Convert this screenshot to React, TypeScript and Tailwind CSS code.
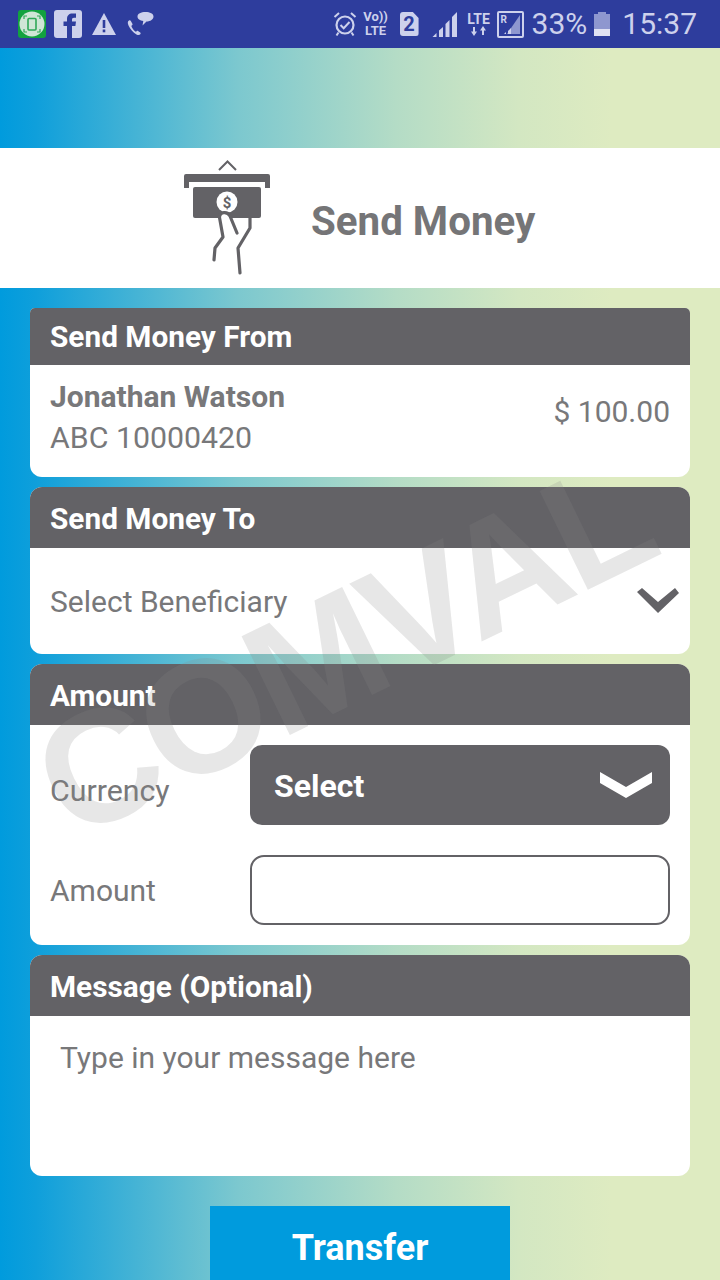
const gradient = "bg-[linear-gradient(90deg,#009bdd_0%,#0f9fdb_5%,#7cc8cf_33%,#b4dcc6_55%,#d3e7c2_72%,#deebc1_85%,#deebc1_100%)]"

const StatusBar = () => (
  <div className="h-12 bg-[#2e3d9d] flex items-center justify-between shrink-0 text-[#cdd1ec]">
    <div className="flex items-center pl-[18px] gap-[8px]">
      {/* screenshot app */}
      <svg width="28" height="28" viewBox="0 0 28 28">
        <rect width="28" height="28" rx="3" fill="#12a23f" />
        <circle cx="14" cy="14" r="12.500" fill="#cfe6d6" />
        <rect x="10" y="8.500" width="8" height="11.500" rx="1" fill="none" stroke="#2fa857" strokeWidth="1.600" />
        <path d="M6 9V6h3M19 6h3v3M22 19v3h-3M9 22H6v-3" fill="none" stroke="#2fa857" strokeWidth="1.200" />
      </svg>
      {/* facebook */}
      <svg width="28" height="28" viewBox="0 0 28 28">
        <rect width="28" height="28" rx="3" fill="#cdd1ec" />
        <path d="M13 28V16H9.500v-4.500H13V9c0-3.600 2.200-5.500 5.300-5.500H22v4.200h-2c-1.500 0-2 .8-2 2v1.800h4l-.6 4.500H18v12z" fill="#2e3d9d" />
      </svg>
      <svg width="24" height="24" viewBox="0 0 24 24" className="ml-[2px]">
        <path d="M12 1 24 23H0z" fill="#cdd1ec" />
        <rect x="10.700" y="8" width="2.600" height="8" fill="#2e3d9d" />
        <rect x="10.700" y="17.500" width="2.600" height="2.800" fill="#2e3d9d" />
      </svg>
      <svg width="27" height="25" viewBox="0 0 27 25" className="ml-[3px]">
        <path d="M2 8.500C.5 9.500.5 11 1.500 13.500c1.500 3.500 4.500 7 8 9 1.700.9 3.200.7 4-.6.3-.5.200-1-.3-1.300L11 19c-.5-.3-1-.2-1.400.3-.4.500-1 .5-1.600 0-1.500-1.300-2.800-3-3.500-4.800-.2-.6 0-1.100.5-1.300.5-.3.700-.7.500-1.300L3.700 8.800C3.500 8.300 2.600 8.100 2 8.500z" fill="#cdd1ec" />
        <path d="M18.500 0C23 0 26.500 1.700 26.500 4.500S23.500 9.500 19.500 9.500l-4 4 .8-4.500C13 8.500 10.500 7 10.500 4.500 10.500 1.700 14 0 18.500 0z" fill="#cdd1ec" />
      </svg>
    </div>
    <div className="flex items-center pr-[23px]">
      {/* alarm */}
      <svg width="24" height="26" viewBox="0 0 24 26" fill="none" stroke="#cdd1ec" className="mr-[7px]">
        <circle cx="12" cy="14" r="8.500" strokeWidth="2.200" />
        <path d="m7.500 14 3.200 3.200 5.800-6.200" strokeWidth="2" />
        <path d="M1.500 6 6 2M22.500 6 18 2M5.500 21.500 3.500 24.500M18.500 21.500l2 3" strokeWidth="2" />
      </svg>
      <div className="flex flex-col items-center w-[24px] text-[13px] leading-[14px] font-bold mr-[12px] font-['Roboto',sans-serif]">
        <span className="whitespace-nowrap">Vo))</span>
        <span>LTE</span>
      </div>
      {/* sim 2 */}
      <div className="w-[19px] h-[24px] bg-[#cdd1ec] rounded-[3px] [clip-path:polygon(0_0,70%_0,100%_25%,100%_100%,0_100%)] text-[#2e3d9d] flex items-center justify-center text-[20px] font-bold leading-none mr-[13px] font-['Roboto',sans-serif]">
        2
      </div>
      {/* signal */}
      <svg width="25" height="25" viewBox="0 0 25 25" className="mr-[10px]">
        <path d="M25 0v25h-5V5z" fill="#cdd1ec" />
        <path d="M17.500 8v17h-4V12zM11 15v10H7v-6.500zM4.500 21v4H0.500z" fill="#cdd1ec" />
      </svg>
      <div className="flex flex-col items-center w-[24px] mr-[6px] font-['Roboto',sans-serif]">
        <span className="text-[14px] leading-[14px] font-bold">LTE</span>
        <svg width="16" height="10" viewBox="0 0 16 10" fill="#cdd1ec">
          <path d="M3 10 0 5.500h2V1h2v4.500h2zM12 0l3 4.500h-2V9h-2V4.500H9z" />
        </svg>
      </div>
      {/* roaming signal */}
      <div className="relative w-[27px] h-[27px] border-2 border-[#cdd1ec] rounded-[2px] mr-[8px] font-['Roboto',sans-serif]">
        <span className="absolute left-[2px] top-[0px] text-[10px] leading-[13px] font-bold">R</span>
        <svg width="23" height="23" viewBox="0 0 23 23" className="absolute inset-0">
          <path d="M21 2v19H8z" fill="#8e97cf" />
          <path d="M12 15v6H9v-3zM7 19v2H5z" fill="#cdd1ec" />
        </svg>
      </div>
      <span className="text-[30px] leading-none mr-[7px] font-['Roboto',sans-serif]">33%</span>
      <div className="w-[16px] h-[24px] flex flex-col items-center mr-[12px]">
        <div className="w-[8px] h-[2px] bg-[#8e97cf]" />
        <div className="w-[16px] h-[15px] bg-[#8e97cf]" />
        <div className="w-[16px] h-[7px] bg-[#dfe1f3]" />
      </div>
      <span className="text-[30px] leading-none font-['Roboto',sans-serif]">15:37</span>
    </div>
  </div>
)

const ScreenIcon = () => (
  <svg width="90" height="120" viewBox="0 0 90 120" className="shrink-0">
    <path d="M37 12 45.500 3.500 54 12" fill="none" stroke="#636266" strokeWidth="2" />
    <path d="M2 18a2 2 0 0 1 2-2h82a2 2 0 0 1 2 2v12h-5v-6H7v6H2z" fill="#636266" />
    <path d="M11 31a2 2 0 0 1 2-2h64a2 2 0 0 1 2 2v27a2 2 0 0 1-2 2H13a2 2 0 0 1-2-2z" fill="#636266" />
    <circle cx="45" cy="44" r="10.500" fill="#fff" />
    <text x="45" y="50" textAnchor="middle" fontSize="15" fontWeight="700" fill="#636266" fontFamily="Roboto, sans-serif">$</text>
    <path d="M55 76 49 59c-2-6-11-6-11 0l3 20z" fill="#fff" />
    <path d="M55 75 48 58c-2.500-5-10.500-4.500-10.500 1.500L41 79l-8 11-1 12M68 60v10L56 90l2 25" fill="none" stroke="#636266" strokeWidth="3.200" strokeLinejoin="round" strokeLinecap="round" />
  </svg>
)

const CardHeader = ({ title, h }: { title: string; h: string }) => (
  <div className={`bg-[#636266] ${h} pl-5 flex items-center text-white text-[29.800px] font-bold`}>
    <span className="leading-none">{title}</span>
  </div>
)

export default function App() {
  return (
    <div className="relative w-[720px] h-[1280px] overflow-hidden flex flex-col font-['Roboto',sans-serif]">
      <StatusBar />
      <div className={`h-[100px] shrink-0 ${gradient}`} />
      <div className="h-[140px] shrink-0 bg-white flex items-center pl-[182px]">
        <ScreenIcon />
        <h1 className="ml-[39px] pt-[9px] text-[40.300px] font-bold text-[#757577] leading-none">Send Money</h1>
      </div>
      <div className={`flex-1 ${gradient} px-[30px] pt-5 flex flex-col gap-[10px]`}>
        <section className="bg-white rounded-b-[12px] rounded-t-[5px] overflow-hidden h-[169px]">
          <CardHeader title="Send Money From" h="h-[57px]" />
          <div className="flex items-center justify-between px-5 pt-[12px]">
            <div>
              <div className="text-[30px] leading-[40px] font-bold text-[#78787a]">Jonathan Watson</div>
              <div className="text-[30.300px] leading-[42px] text-[#78787a]">ABC 10000420</div>
            </div>
            <div className="text-[30px] text-[#78787a] leading-none mb-[12px]">$ 100.00</div>
          </div>
        </section>
        <section className="bg-white rounded-[12px] overflow-hidden h-[167px]">
          <CardHeader title="Send Money To" h="h-[61px] pt-[2px]" />
          <div className="flex items-center justify-between pl-5 pr-[10px] h-[106px]">
            <span className="text-[30px] leading-none text-[#78787a] pt-[2px]">Select Beneficiary</span>
            <svg width="44" height="26" viewBox="0 0 44 26">
              <path d="M1 4 6 0 22 14 39 0l4 5-21 20z" fill="#636266" />
            </svg>
          </div>
        </section>
        <section className="bg-white rounded-[12px] overflow-hidden h-[281px]">
          <CardHeader title="Amount" h="h-[61px] pt-[2px]" />
          <div className="grid grid-cols-[200px_1fr] pl-5 pr-5 pt-5 gap-y-[30px]">
            <div className="text-[30.300px] text-[#78787a] leading-none self-center pt-[12px]">Currency</div>
            <div className="h-[80px] bg-[#636266] rounded-[12px] flex items-center justify-between pl-6 pr-[18px]">
              <span className="text-white text-[32px] font-bold leading-none pt-[2px]">Select</span>
              <svg width="52" height="26" viewBox="0 0 52 26">
                <path d="M0 0 26 15 52 0v11L26 26 0 11z" fill="#fff" />
              </svg>
            </div>
            <div className="text-[30px] text-[#78787a] leading-none self-center pt-[2px]">Amount</div>
            <div className="h-[70px] bg-white border-2 border-[#636266] rounded-[14px]" />
          </div>
        </section>
        <section className="bg-white rounded-[12px] overflow-hidden h-[221px]">
          <CardHeader title="Message (Optional)" h="h-[61px] pt-[2px]" />
          <div className="pl-[30px] pt-[27px] text-[30px] leading-none text-[#78787a]">Type in your message here</div>
        </section>
        <div className="flex justify-center mt-5">
          <button className="w-[300px] h-[74px] bg-[#009bdd] text-white text-[36px] font-bold pt-[9px]">Transfer</button>
        </div>
      </div>
      {/* watermark */}
      <div className="absolute left-[3px] top-[568px] w-[680px] text-center text-[160px] leading-none font-bold tracking-[-4px] text-[#858585]/20 -rotate-[26deg] origin-center pointer-events-none font-['Liberation_Sans',sans-serif]">
        COMVAL
      </div>
    </div>
  )
}
